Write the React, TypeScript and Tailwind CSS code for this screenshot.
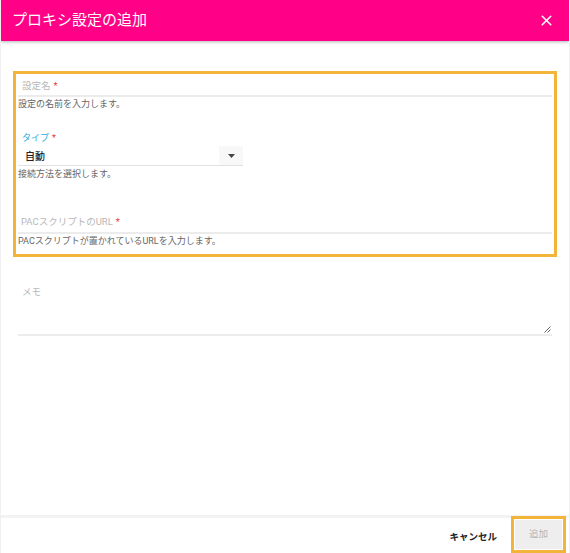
import { X } from 'lucide-react';

const font = { fontFamily: 'Roboto, "Noto Sans CJK JP", sans-serif' };

function Required() {
  return <span className="ml-[3px] text-[#e53935]">*</span>;
}

function Helper({ children }: { children: React.ReactNode }) {
  return <p className="h-[14px] text-[9px] leading-[14px] text-[#666]">{children}</p>;
}

export default function App() {
  return (
    <div
      style={font}
      className="flex h-[553px] w-[570px] flex-col overflow-hidden border-x border-x-[#f0f0f0] bg-white"
    >
      {/* header */}
      <header className="relative z-10 flex h-[41px] shrink-0 items-center justify-between bg-[#ff0087] pl-[11px] pr-[14px] shadow-[0_1px_3px_rgba(0,0,0,0.3)]">
        <h1 className="text-[15px] leading-none text-white">プロキシ設定の追加</h1>
        <X className="h-[17px] w-[17px] text-white" strokeWidth={2.2} />
      </header>

      {/* form body */}
      <main className="flex-1 px-[12px] pt-[30px]">
        <div className="border-[3px] border-[#f3b43a] px-[2px] pb-[6px]">
          {/* name */}
          <div className="flex h-[21px] items-center pl-[4px] pt-[4px] text-[9.5px] text-[#b8b8b8]">
            設定名
            <Required />
          </div>
          <div className="h-[2px] bg-[#ececec]" />
          <Helper>設定の名前を入力します。</Helper>

          {/* type */}
          <div className="mt-[21px] flex h-[14px] items-center pl-[4px] text-[9px] text-[#2aa9de]">
            タイプ
            <Required />
          </div>
          <div className="flex h-[20px] w-[225px] items-stretch border-b border-[#e2e2e2]">
            <span className="flex flex-1 items-center pl-[7px] pt-[1px] text-[10px] font-medium text-[#222]">自動</span>
            <span className="flex w-[24px] items-center justify-center bg-[#f8f8f8]">
              <svg width="7" height="4" viewBox="0 0 7 4">
                <path d="M0 0h7L3.5 4z" fill="#444" />
              </svg>
            </span>
          </div>
          <div className="mt-[1px]">
            <Helper>接続方法を選択します。</Helper>
          </div>

          {/* PAC script url */}
          <div className="mt-[28px] flex h-[23px] items-center pl-[3px] pt-[4px] text-[9.5px] text-[#b8b8b8]">
            PACスクリプトのURL
            <Required />
          </div>
          <div className="h-[2px] bg-[#ececec]" />
          <Helper>PACスクリプトが置かれているURLを入力します。</Helper>
        </div>

        {/* memo */}
        <div className="relative mx-[5px] mt-[24px] h-[55px] border-b-2 border-[#ececec]">
          <span className="absolute left-[4px] top-[4px] text-[9.5px] text-[#b8b8b8]">メモ</span>
          <svg className="absolute bottom-[1px] right-[1px]" width="7" height="7" viewBox="0 0 7 7">
            <path d="M6.5 0.5L0.5 6.5M6.5 3.5L3.5 6.5" stroke="#666" strokeWidth="1" />
          </svg>
        </div>
      </main>

      {/* footer */}
      <footer className="flex h-[38px] shrink-0 items-end justify-end border-t-[3px] border-t-[#f3f3f3] pr-[3px]">
        <button className="mb-[9px] mr-[14px] text-[9.5px] font-bold text-[#222]">キャンセル</button>
        <div className="border-[3px] border-[#f3b43a] p-[1px]">
          <button className="h-[29px] w-[47px] bg-[#eeeeee] text-[9.5px] text-[#b5b5b5]">追加</button>
        </div>
      </footer>
    </div>
  );
}
